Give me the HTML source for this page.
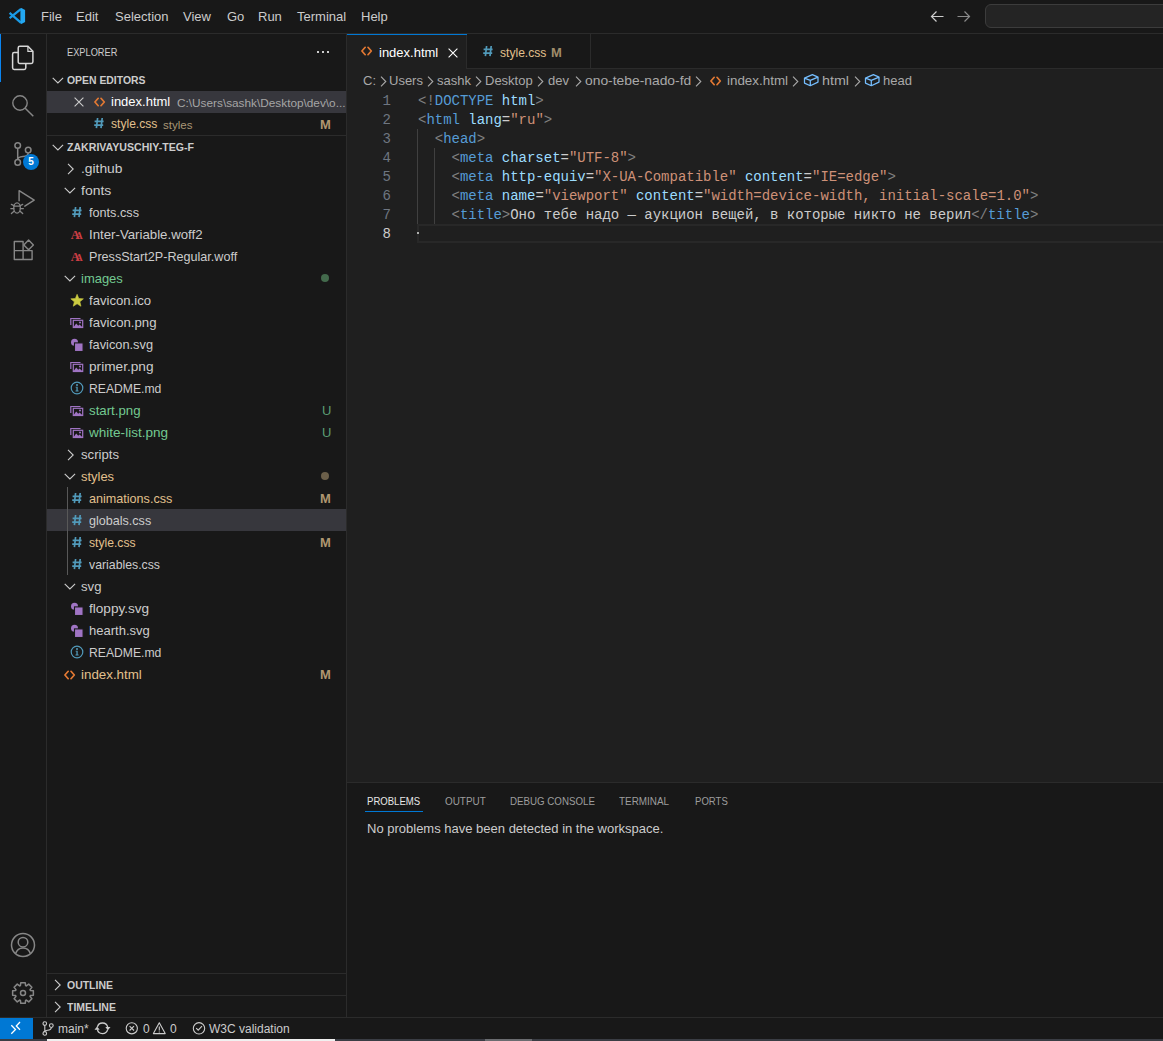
<!DOCTYPE html>
<html>
<head>
<meta charset="utf-8">
<style>
*{box-sizing:border-box;margin:0;padding:0}
html,body{width:1163px;height:1041px;overflow:hidden;background:#181818;font-family:"Liberation Sans",sans-serif;color:#cccccc}
.a{position:absolute}
.t{position:absolute;white-space:pre;font-size:13px;line-height:22px}
svg{position:absolute;overflow:visible}
/* title bar */
#title{left:0;top:0;width:1163px;height:34px;background:#181818;border-bottom:1px solid #2b2b2b}
#title .m{position:absolute;top:0;line-height:33px;font-size:13px;color:#cccccc}
/* activity bar */
#act{left:0;top:34px;width:47px;height:983px;background:#181818;border-right:1px solid #2b2b2b}
/* sidebar */
#side{left:47px;top:34px;width:300px;height:983px;background:#181818;border-right:1px solid #2b2b2b}
.row{position:absolute;left:0;width:299px;height:22px}
.hdr{font-weight:bold;font-size:11px;color:#cccccc;transform-origin:0 50%}
.gm{position:absolute;top:0;font-weight:bold;font-size:13px;line-height:22px;color:#e2c08d}
/* editor */
#editor{left:347px;top:34px;width:816px;height:748px;background:#1f1f1f}
#tabs{left:0;top:0;width:816px;height:35px;background:#181818;border-bottom:1px solid #2b2b2b}
.code{position:absolute;white-space:pre;font-family:"Liberation Mono",monospace;font-size:14px;line-height:19px;color:#cccccc;letter-spacing:-0.02px}
.p{color:#808080}.tg{color:#569cd6}.at{color:#9cdcfe}.s{color:#ce9178}
.ln{position:absolute;font-family:"Liberation Mono",monospace;font-size:14px;line-height:19px;color:#6e7681;text-align:right;width:20px}
/* panel */
#panel{left:347px;top:782px;width:816px;height:235px;background:#181818;border-top:1px solid #2b2b2b}
.pt{position:absolute;top:8px;font-size:11px;line-height:20px;color:#9d9d9d;transform-origin:0 50%}
/* status */
#status{left:0;top:1017px;width:1163px;height:22px;background:#181818;border-top:1px solid #2b2b2b}
#strip{left:0;top:1039px;width:1163px;height:2px;background:#3a3d44}
</style>
</head>
<body>
<svg width="0" height="0" style="position:absolute">
 <defs>
  <symbol style="overflow:visible" id="i-css" viewBox="0 0 16 22"><path d="M3.6 5L2.4 15.2M8.2 5L7 15.2M0.6 8.3H9.6M0.2 12.2H9.2" stroke="#519aba" stroke-width="1.7" fill="none"/></symbol>
  <symbol style="overflow:visible" id="i-html" viewBox="0 0 16 22"><path d="M4.2 7.3L0.9 11L4.2 14.7M7 7.3L10.3 11L7 14.7" stroke="#e37933" stroke-width="1.7" fill="none" stroke-linecap="round" stroke-linejoin="round"/></symbol>
  <symbol style="overflow:visible" id="i-font" viewBox="0 0 16 22"><text x="-1.3" y="14.9" font-family="Liberation Serif" font-weight="bold" font-size="12.5" fill="#cc3e44">A</text><text x="3.6" y="14.9" font-family="Liberation Serif" font-weight="bold" font-size="10" fill="#cc3e44">A</text></symbol>
  <symbol style="overflow:visible" id="i-star" viewBox="0 0 16 22"><g transform="translate(0,1)"><path d="M5.10 3.30 L6.80 7.55 L11.38 7.86 L7.86 10.80 L8.98 15.24 L5.10 12.80 L1.22 15.24 L2.34 10.80 L-1.18 7.86 L3.40 7.55Z" fill="#cbcb41" stroke="#cbcb41" stroke-width="0.6" stroke-linejoin="round"/></g></symbol>
  <symbol style="overflow:visible" id="i-img" viewBox="0 0 16 22"><g transform="translate(0,1)"><path d="M-1.2 12V5.5H8.5" stroke="#a074c4" stroke-width="1.2" fill="none"/><rect x="1.3" y="7.3" width="9.4" height="7.2" fill="none" stroke="#a074c4" stroke-width="1.2"/><path d="M1.3 14.5L4.2 10.6L6.2 12.8L7.6 11.4L10.7 14.5Z" fill="#a074c4"/><circle cx="8" cy="9.6" r="1" fill="#a074c4"/></g></symbol>
  <symbol style="overflow:visible" id="i-svg" viewBox="0 0 16 22"><circle cx="2.5" cy="8.2" r="3.5" fill="#a074c4"/><rect x="2.5" y="8.9" width="8.6" height="8.6" fill="#a074c4" stroke="#181818" stroke-width="1.1"/></symbol>
  <symbol style="overflow:visible" id="i-info" viewBox="0 0 16 22"><circle cx="5" cy="10" r="5.8" fill="none" stroke="#519aba" stroke-width="1.2"/><circle cx="5" cy="7" r="1" fill="#519aba"/><path d="M3.6 8.8H5.7V12.6H6.6V13.4H3.5V12.6H4.4V9.6H3.6Z" fill="#519aba"/></symbol>
 </defs>
</svg>
<svg width="0" height="0" style="position:absolute">
 <defs>
  <symbol style="overflow:visible" id="i-cube" viewBox="0 0 16 16"><path d="M1.5 4.1L9.4 0.6L15 3.1V8.1L7.3 11.7L1.5 9.1Z M1.5 4.1L7.3 6.4L15 3.1 M7.3 6.4V11.7" stroke="#75beff" stroke-width="1.25" fill="none" stroke-linejoin="round"/></symbol>
 </defs>
</svg>

<!-- TITLE BAR -->
<div id="title" class="a">
  <svg style="left:0;top:0" width="33" height="33" viewBox="0 0 33 33">
    <path d="M9.6 12.9L20.8 22.6M9.6 18.1L20.8 9.2" stroke="#1a9be6" stroke-width="2.3" stroke-linecap="butt"/>
    <path d="M20.4 8.3L21.4 8L25.1 9.9V21.9L21.4 23.9L20.4 23.6Z" fill="#23a8f2"/>
  </svg>
  <span class="m" style="left:41px">File</span>
  <span class="m" style="left:76px">Edit</span>
  <span class="m" style="left:115px">Selection</span>
  <span class="m" style="left:183px">View</span>
  <span class="m" style="left:227px">Go</span>
  <span class="m" style="left:258px">Run</span>
  <span class="m" style="left:297px">Terminal</span>
  <span class="m" style="left:361px">Help</span>
  <svg style="left:930px;top:10px" width="14" height="13" viewBox="0 0 14 13"><path d="M13.5 6.5H1.5M6.5 1.5L1.5 6.5L6.5 11.5" stroke="#cccccc" stroke-width="1.2" fill="none"/></svg>
  <svg style="left:957px;top:10px" width="14" height="13" viewBox="0 0 14 13"><path d="M0.5 6.5H12.5M7.5 1.5L12.5 6.5L7.5 11.5" stroke="#8a8a8a" stroke-width="1.2" fill="none"/></svg>
  <div class="a" style="left:985px;top:4px;width:190px;height:24px;border:1px solid #3c3c3c;border-radius:6px;background:#242424"></div>
</div>

<!-- ACTIVITY BAR -->
<div id="act" class="a">
  <div class="a" style="left:0;top:0;width:1px;height:48px;background:#0a84f0"></div>
  <!-- explorer -->
  <svg style="left:11px;top:11px" width="24" height="26" viewBox="0 0 24 26">
    <path d="M7.2 7.6H3.2C2.3 7.6 1.6 8.3 1.6 9.2V22.8C1.6 23.7 2.3 24.4 3.2 24.4H13.2C14.1 24.4 14.8 23.7 14.8 22.8V18.6" stroke="#d7d7d7" stroke-width="1.5" fill="none"/>
    <path d="M8.8 1.3H16.9L21.9 6.3V16.8C21.9 17.7 21.2 18.4 20.3 18.4H8.8C7.9 18.4 7.2 17.7 7.2 16.8V2.9C7.2 2 7.9 1.3 8.8 1.3Z" stroke="#d7d7d7" stroke-width="1.5" fill="none"/>
    <path d="M16.9 1.3V6.3H21.9" stroke="#d7d7d7" stroke-width="1.2" fill="none"/>
  </svg>
  <!-- search -->
  <svg style="left:11px;top:60px" width="24" height="24" viewBox="0 0 24 24">
    <circle cx="9" cy="9" r="7.2" stroke="#868686" stroke-width="1.4" fill="none"/>
    <path d="M14.2 14.2L22.3 22.3" stroke="#868686" stroke-width="1.5"/>
  </svg>
  <!-- source control -->
  <svg style="left:11px;top:108px" width="24" height="26" viewBox="0 0 24 26">
    <circle cx="6.7" cy="3.5" r="2.8" stroke="#868686" stroke-width="1.5" fill="none"/>
    <circle cx="17.2" cy="8.1" r="2.8" stroke="#868686" stroke-width="1.5" fill="none"/>
    <circle cx="6.7" cy="20.4" r="2.8" stroke="#868686" stroke-width="1.5" fill="none"/>
    <path d="M6.7 6.3V17.6M17.2 10.9C17.2 13.6 15 14.3 12 14.6C9 14.9 6.7 15.4 6.7 17.6" stroke="#868686" stroke-width="1.5" fill="none"/>
  </svg>
  <div class="a" style="left:23px;top:120px;width:16px;height:16px;border-radius:8px;background:#0078d4;color:#ffffff;font-size:10px;font-weight:bold;line-height:16px;text-align:center">5</div>
  <!-- run & debug -->
  <svg style="left:10px;top:155px" width="26" height="28" viewBox="0 0 26 28">
    <path d="M9.1 11.8V1.6L24.2 11.1L14.8 17.2" stroke="#868686" stroke-width="1.4" fill="none" stroke-linejoin="round" stroke-linecap="round"/>
    <ellipse cx="7.05" cy="19" rx="3.3" ry="5.1" stroke="#868686" stroke-width="1.3" fill="none"/>
    <path d="M3.8 17.1H10.3M1.4 15.4L3.9 16.6M12.7 15.4L10.2 16.6M0.9 19.7H3.8M10.3 19.7H13.3M1.4 24.6L4 22.2M12.7 24.6L10.1 22.2" stroke="#868686" stroke-width="1.3" fill="none" stroke-linecap="round"/>
  </svg>
  <!-- extensions -->
  <svg style="left:12px;top:205px" width="24" height="24" viewBox="0 0 24 24">
    <path d="M2.3 2.5H11.1V20.5H2.3Z M2.3 11.6H20.1V20.5H11.1" stroke="#868686" stroke-width="1.4" fill="none" stroke-linejoin="round"/>
    <path d="M16.6 1.1L21.4 5.9L16.6 10.7L11.8 5.9Z" stroke="#868686" stroke-width="1.4" fill="none" stroke-linejoin="round"/>
  </svg>
  <!-- accounts -->
  <svg style="left:10px;top:898px" width="26" height="26" viewBox="0 0 26 26">
    <circle cx="13" cy="13" r="11.5" stroke="#868686" stroke-width="1.5" fill="none"/>
    <circle cx="13" cy="10.2" r="4.8" stroke="#868686" stroke-width="1.5" fill="none"/>
    <path d="M5.6 21.6C6.8 17.9 9.6 15.9 13 15.9C16.4 15.9 19.2 17.9 20.4 21.6" stroke="#868686" stroke-width="1.5" fill="none"/>
  </svg>
  <!-- settings -->
  <svg style="left:11px;top:947px" width="24" height="24" viewBox="0 0 24 24">
    <path d="M19.35 9.40 L22.37 9.79 L22.37 14.21 L19.35 14.60 L19.04 15.36 L20.89 17.77 L17.77 20.89 L15.36 19.04 L14.60 19.35 L14.21 22.37 L9.79 22.37 L9.40 19.35 L8.64 19.04 L6.23 20.89 L3.11 17.77 L4.96 15.36 L4.65 14.60 L1.63 14.21 L1.63 9.79 L4.65 9.40 L4.96 8.64 L3.11 6.23 L6.23 3.11 L8.64 4.96 L9.40 4.65 L9.79 1.63 L14.21 1.63 L14.60 4.65 L15.36 4.96 L17.77 3.11 L20.89 6.23 L19.04 8.64Z" stroke="#868686" stroke-width="1.5" fill="none" stroke-linejoin="round"/>
    <circle cx="12" cy="12" r="2.5" stroke="#868686" stroke-width="1.5" fill="none"/>
  </svg>
</div>

<!-- SIDEBAR -->
<div id="side" class="a">
  <span class="t" style="left:20px;top:7px;font-size:11px;line-height:22px;transform:scaleX(0.84);transform-origin:0 50%">EXPLORER</span>
  <div class="a" style="left:270px;top:17px;width:2px;height:2px;background:#cccccc"></div>
  <div class="a" style="left:275px;top:17px;width:2px;height:2px;background:#cccccc"></div>
  <div class="a" style="left:280px;top:17px;width:2px;height:2px;background:#cccccc"></div>
  <div class="row" style="top:35px">
    <svg style="left:5px;top:8px" width="12" height="7" viewBox="0 0 12 7"><path d="M0.7 0.8L5.9 6L11.1 0.8" stroke="#cccccc" stroke-width="1.1" fill="none"/></svg>
    <span class="t hdr" style="left:20px;transform:scaleX(0.946)">OPEN EDITORS</span>
  </div>
  <div class="row" style="top:57px;background:#37373d">
    <svg style="left:27px;top:6px" width="10" height="10" viewBox="0 0 10 10"><path d="M0.6 0.6L9.4 9.4M9.4 0.6L0.6 9.4" stroke="#cccccc" stroke-width="1.1"/></svg>
    <svg style="left:47px;top:0" width="16" height="22"><use href="#i-html"/></svg>
    <span class="t" style="left:64px;color:#ffffff">index.html</span>
    <span class="t" style="left:130px;top:1px;font-size:11.8px;color:#a6a6a6">C:\Users\sashk\Desktop\dev\o...</span>
  </div>
  <div class="row" style="top:79px">
    <svg style="left:47px;top:0" width="16" height="22"><use href="#i-css"/></svg>
    <span class="t" style="left:64px;color:#e2c08d;transform:scaleX(0.93);transform-origin:0 50%">style.css</span>
    <span class="t" style="left:116px;top:1px;font-size:11.5px;color:#a89776">styles</span>
    <span class="gm" style="left:273px;top:1px;color:#af9670">M</span>
  </div>
  <div class="a" style="left:0;top:101px;width:299px;height:1px;background:#2b2b2b"></div>
  <div class="row" style="top:102px">
    <svg style="left:5px;top:8px" width="12" height="7" viewBox="0 0 12 7"><path d="M0.7 0.8L5.9 6L11.1 0.8" stroke="#cccccc" stroke-width="1.1" fill="none"/></svg>
    <span class="t hdr" style="left:20px;transform:scaleX(0.962)">ZAKRIVAYUSCHIY-TEG-F</span>
  </div>
<div class="row" style="top:123px"><div class="a" style="left:0;top:1px;width:299px;height:22px">
<svg style="left:20px;top:5px" width="8" height="12" viewBox="0 0 8 12"><path d="M1 0.8L6.2 6L1 11.2" stroke="#cccccc" stroke-width="1.1" fill="none"/></svg>
<span class="t" style="left:34px;color:#cccccc;transform:scaleX(1.063);transform-origin:0 50%">.github</span>
</div></div>
<div class="row" style="top:145px"><div class="a" style="left:0;top:1px;width:299px;height:22px">
<svg style="left:17px;top:7px" width="12" height="7" viewBox="0 0 12 7"><path d="M0.7 0.8L5.9 6L11.1 0.8" stroke="#cccccc" stroke-width="1.1" fill="none"/></svg>
<span class="t" style="left:34px;color:#cccccc;transform:scaleX(1.074);transform-origin:0 50%">fonts</span>
</div></div>
<div class="row" style="top:167px"><div class="a" style="left:0;top:1px;width:299px;height:22px">
<svg style="left:25px;top:0px" width="16" height="22"><use href="#i-css"/></svg>
<span class="t" style="left:42px;color:#cccccc;transform:scaleX(0.974);transform-origin:0 50%">fonts.css</span>
</div></div>
<div class="row" style="top:189px"><div class="a" style="left:0;top:1px;width:299px;height:22px">
<svg style="left:25px;top:0px" width="16" height="22"><use href="#i-font"/></svg>
<span class="t" style="left:42px;color:#cccccc;transform:scaleX(1.018);transform-origin:0 50%">Inter-Variable.woff2</span>
</div></div>
<div class="row" style="top:211px"><div class="a" style="left:0;top:1px;width:299px;height:22px">
<svg style="left:25px;top:0px" width="16" height="22"><use href="#i-font"/></svg>
<span class="t" style="left:42px;color:#cccccc;transform:scaleX(0.969);transform-origin:0 50%">PressStart2P-Regular.woff</span>
</div></div>
<div class="row" style="top:233px"><div class="a" style="left:0;top:1px;width:299px;height:22px">
<svg style="left:17px;top:7px" width="12" height="7" viewBox="0 0 12 7"><path d="M0.7 0.8L5.9 6L11.1 0.8" stroke="#cccccc" stroke-width="1.1" fill="none"/></svg>
<span class="t" style="left:34px;color:#73c991;transform:scaleX(0.998);transform-origin:0 50%">images</span>
<div class="a" style="left:274px;top:6px;width:8px;height:8px;border-radius:4px;background:#436a4c"></div>
</div></div>
<div class="row" style="top:255px"><div class="a" style="left:0;top:1px;width:299px;height:22px">
<svg style="left:25px;top:0px" width="16" height="22"><use href="#i-star"/></svg>
<span class="t" style="left:42px;color:#cccccc;transform:scaleX(1.01);transform-origin:0 50%">favicon.ico</span>
</div></div>
<div class="row" style="top:277px"><div class="a" style="left:0;top:1px;width:299px;height:22px">
<svg style="left:25px;top:0px" width="16" height="22"><use href="#i-img"/></svg>
<span class="t" style="left:42px;color:#cccccc;transform:scaleX(1.015);transform-origin:0 50%">favicon.png</span>
</div></div>
<div class="row" style="top:299px"><div class="a" style="left:0;top:1px;width:299px;height:22px">
<svg style="left:25px;top:0px" width="16" height="22"><use href="#i-svg"/></svg>
<span class="t" style="left:42px;color:#cccccc;transform:scaleX(0.984);transform-origin:0 50%">favicon.svg</span>
</div></div>
<div class="row" style="top:321px"><div class="a" style="left:0;top:1px;width:299px;height:22px">
<svg style="left:25px;top:0px" width="16" height="22"><use href="#i-img"/></svg>
<span class="t" style="left:42px;color:#cccccc;transform:scaleX(1.05);transform-origin:0 50%">primer.png</span>
</div></div>
<div class="row" style="top:343px"><div class="a" style="left:0;top:1px;width:299px;height:22px">
<svg style="left:25px;top:0px" width="16" height="22"><use href="#i-info"/></svg>
<span class="t" style="left:42px;color:#cccccc;transform:scaleX(0.936);transform-origin:0 50%">README.md</span>
</div></div>
<div class="row" style="top:365px"><div class="a" style="left:0;top:1px;width:299px;height:22px">
<svg style="left:25px;top:0px" width="16" height="22"><use href="#i-img"/></svg>
<span class="t" style="left:42px;color:#73c991;transform:scaleX(1.02);transform-origin:0 50%">start.png</span>
<span class="gm" style="left:275px;font-weight:normal;font-size:13px;color:#5c9d73">U</span>
</div></div>
<div class="row" style="top:387px"><div class="a" style="left:0;top:1px;width:299px;height:22px">
<svg style="left:25px;top:0px" width="16" height="22"><use href="#i-img"/></svg>
<span class="t" style="left:42px;color:#73c991;transform:scaleX(1.042);transform-origin:0 50%">white-list.png</span>
<span class="gm" style="left:275px;font-weight:normal;font-size:13px;color:#5c9d73">U</span>
</div></div>
<div class="row" style="top:409px"><div class="a" style="left:0;top:1px;width:299px;height:22px">
<svg style="left:20px;top:5px" width="8" height="12" viewBox="0 0 8 12"><path d="M1 0.8L6.2 6L1 11.2" stroke="#cccccc" stroke-width="1.1" fill="none"/></svg>
<span class="t" style="left:34px;color:#cccccc;transform:scaleX(1.011);transform-origin:0 50%">scripts</span>
</div></div>
<div class="row" style="top:431px"><div class="a" style="left:0;top:1px;width:299px;height:22px">
<svg style="left:17px;top:7px" width="12" height="7" viewBox="0 0 12 7"><path d="M0.7 0.8L5.9 6L11.1 0.8" stroke="#cccccc" stroke-width="1.1" fill="none"/></svg>
<span class="t" style="left:34px;color:#e2c08d;transform:scaleX(0.994);transform-origin:0 50%">styles</span>
<div class="a" style="left:274px;top:6px;width:8px;height:8px;border-radius:4px;background:#6b5f4a"></div>
</div></div>
<div class="row" style="top:453px"><div class="a" style="left:0;top:1px;width:299px;height:22px">
<svg style="left:25px;top:0px" width="16" height="22"><use href="#i-css"/></svg>
<span class="t" style="left:42px;color:#e2c08d;transform:scaleX(0.969);transform-origin:0 50%">animations.css</span>
<span class="gm" style="left:273px;color:#af9670">M</span>
</div></div>
<div class="row" style="top:475px;background:#37373d"><div class="a" style="left:0;top:1px;width:299px;height:22px">
<svg style="left:25px;top:0px" width="16" height="22"><use href="#i-css"/></svg>
<span class="t" style="left:42px;color:#cccccc;transform:scaleX(0.967);transform-origin:0 50%">globals.css</span>
</div></div>
<div class="row" style="top:497px"><div class="a" style="left:0;top:1px;width:299px;height:22px">
<svg style="left:25px;top:0px" width="16" height="22"><use href="#i-css"/></svg>
<span class="t" style="left:42px;color:#e2c08d;transform:scaleX(0.935);transform-origin:0 50%">style.css</span>
<span class="gm" style="left:273px;color:#af9670">M</span>
</div></div>
<div class="row" style="top:519px"><div class="a" style="left:0;top:1px;width:299px;height:22px">
<svg style="left:25px;top:0px" width="16" height="22"><use href="#i-css"/></svg>
<span class="t" style="left:42px;color:#cccccc;transform:scaleX(0.945);transform-origin:0 50%">variables.css</span>
</div></div>
<div class="row" style="top:541px"><div class="a" style="left:0;top:1px;width:299px;height:22px">
<svg style="left:17px;top:7px" width="12" height="7" viewBox="0 0 12 7"><path d="M0.7 0.8L5.9 6L11.1 0.8" stroke="#cccccc" stroke-width="1.1" fill="none"/></svg>
<span class="t" style="left:34px;color:#cccccc;transform:scaleX(1.011);transform-origin:0 50%">svg</span>
</div></div>
<div class="row" style="top:563px"><div class="a" style="left:0;top:1px;width:299px;height:22px">
<svg style="left:25px;top:0px" width="16" height="22"><use href="#i-svg"/></svg>
<span class="t" style="left:42px;color:#cccccc;transform:scaleX(1.045);transform-origin:0 50%">floppy.svg</span>
</div></div>
<div class="row" style="top:585px"><div class="a" style="left:0;top:1px;width:299px;height:22px">
<svg style="left:25px;top:0px" width="16" height="22"><use href="#i-svg"/></svg>
<span class="t" style="left:42px;color:#cccccc;transform:scaleX(1.002);transform-origin:0 50%">hearth.svg</span>
</div></div>
<div class="row" style="top:607px"><div class="a" style="left:0;top:1px;width:299px;height:22px">
<svg style="left:25px;top:0px" width="16" height="22"><use href="#i-info"/></svg>
<span class="t" style="left:42px;color:#cccccc;transform:scaleX(0.936);transform-origin:0 50%">README.md</span>
</div></div>
<div class="row" style="top:629px"><div class="a" style="left:0;top:1px;width:299px;height:22px">
<svg style="left:17px;top:0px" width="16" height="22"><use href="#i-html"/></svg>
<span class="t" style="left:34px;color:#e2c08d;transform:scaleX(1.026);transform-origin:0 50%">index.html</span>
<span class="gm" style="left:273px;color:#af9670">M</span>
</div></div>

  <div class="a" style="left:20px;top:453px;width:1px;height:88px;background:#585858"></div>
  <div class="a" style="left:0;top:939px;width:299px;height:1px;background:#2b2b2b"></div>
  <div class="row" style="top:940px">
    <svg style="left:7px;top:5px" width="8" height="12" viewBox="0 0 8 12"><path d="M1 0.8L6.2 6L1 11.2" stroke="#cccccc" stroke-width="1.1" fill="none"/></svg>
    <span class="t hdr" style="left:20px;transform:scaleX(0.952)">OUTLINE</span>
  </div>
  <div class="a" style="left:0;top:961px;width:299px;height:1px;background:#2b2b2b"></div>
  <div class="row" style="top:962px">
    <svg style="left:7px;top:5px" width="8" height="12" viewBox="0 0 8 12"><path d="M1 0.8L6.2 6L1 11.2" stroke="#cccccc" stroke-width="1.1" fill="none"/></svg>
    <span class="t hdr" style="left:20px;transform:scaleX(0.952)">TIMELINE</span>
  </div>
</div>

<!-- EDITOR -->
<div id="editor" class="a">
  <div id="tabs" class="a">
    <div class="a" style="left:0;top:0;width:120px;height:35px;background:#1f1f1f;border-right:1px solid #2b2b2b"></div>
    <div class="a" style="left:0;top:0;width:120px;height:1px;background:#0078d4"></div>
    <svg style="left:14px;top:6px" width="16" height="22"><use href="#i-html"/></svg>
    <span class="t" style="left:32px;top:8px;color:#ffffff">index.html</span>
    <svg style="left:101px;top:14px" width="10" height="10" viewBox="0 0 10 10"><path d="M0.6 0.6L9.4 9.4M9.4 0.6L0.6 9.4" stroke="#ffffff" stroke-width="1.1"/></svg>
    <div class="a" style="left:120px;top:0;width:124px;height:34px;border-right:1px solid #2b2b2b"></div>
    <svg style="left:136px;top:7px" width="16" height="22"><use href="#i-css"/></svg>
    <span class="t" style="left:153px;top:8px;color:#e2c08d;transform:scaleX(0.93);transform-origin:0 50%">style.css</span>
    <span class="gm" style="left:204px;top:8px;color:#a08c6a">M</span>
  </div>
  <!-- breadcrumbs -->
  <div class="a" style="left:0;top:36px;width:816px;height:22px">
    <span class="t" style="left:16px;color:#a9a9a9">C:</span>
    <svg style="left:33px;top:6px" width="8" height="11" viewBox="0 0 8 11"><path d="M1 0.6L5.8 5.5L1 10.4" stroke="#a9a9a9" stroke-width="1.1" fill="none"/></svg>
    <span class="t" style="left:42px;color:#a9a9a9">Users</span>
    <svg style="left:80px;top:6px" width="8" height="11" viewBox="0 0 8 11"><path d="M1 0.6L5.8 5.5L1 10.4" stroke="#a9a9a9" stroke-width="1.1" fill="none"/></svg>
    <span class="t" style="left:90px;color:#a9a9a9">sashk</span>
    <svg style="left:128px;top:6px" width="8" height="11" viewBox="0 0 8 11"><path d="M1 0.6L5.8 5.5L1 10.4" stroke="#a9a9a9" stroke-width="1.1" fill="none"/></svg>
    <span class="t" style="left:138px;color:#a9a9a9">Desktop</span>
    <svg style="left:190px;top:6px" width="8" height="11" viewBox="0 0 8 11"><path d="M1 0.6L5.8 5.5L1 10.4" stroke="#a9a9a9" stroke-width="1.1" fill="none"/></svg>
    <span class="t" style="left:201px;color:#a9a9a9">dev</span>
    <svg style="left:228px;top:6px" width="8" height="11" viewBox="0 0 8 11"><path d="M1 0.6L5.8 5.5L1 10.4" stroke="#a9a9a9" stroke-width="1.1" fill="none"/></svg>
    <span class="t" style="left:238px;color:#a9a9a9;transform:scaleX(1.065);transform-origin:0 50%">ono-tebe-nado-fd</span>
    <svg style="left:348px;top:6px" width="8" height="11" viewBox="0 0 8 11"><path d="M1 0.6L5.8 5.5L1 10.4" stroke="#a9a9a9" stroke-width="1.1" fill="none"/></svg>
    <svg style="left:363px;top:0px" width="16" height="22"><use href="#i-html"/></svg>
    <span class="t" style="left:380px;color:#a9a9a9;transform:scaleX(1.03);transform-origin:0 50%">index.html</span>
    <svg style="left:445px;top:6px" width="8" height="11" viewBox="0 0 8 11"><path d="M1 0.6L5.8 5.5L1 10.4" stroke="#a9a9a9" stroke-width="1.1" fill="none"/></svg>
    <svg style="left:456px;top:4px" width="16" height="16" viewBox="0 0 16 16"><use href="#i-cube"/></svg>
    <span class="t" style="left:475px;color:#a9a9a9;transform:scaleX(1.1);transform-origin:0 50%">html</span>
    <svg style="left:507px;top:6px" width="8" height="11" viewBox="0 0 8 11"><path d="M1 0.6L5.8 5.5L1 10.4" stroke="#a9a9a9" stroke-width="1.1" fill="none"/></svg>
    <svg style="left:517px;top:4px" width="16" height="16" viewBox="0 0 16 16"><use href="#i-cube"/></svg>
    <span class="t" style="left:536px;color:#a9a9a9">head</span>
  </div>
  <!-- gutter -->
  <div class="ln" style="left:24px;top:58px;width:20px">1<br>2<br>3<br>4<br>5<br>6<br>7<br><span style="color:#cccccc">8</span></div>
  <!-- indent guides -->
  <div class="a" style="left:70px;top:95px;width:1px;height:95px;background:#404040"></div>
  <div class="a" style="left:87px;top:114px;width:1px;height:76px;background:#404040"></div>
  <!-- current line -->
  <div class="a" style="left:70px;top:190px;width:746px;height:19px;border:2px solid #282828;border-right:none"></div>
  <div class="a" style="left:70px;top:198px;width:2px;height:2px;background:#aeafad"></div>
  <div class="code" style="left:71px;top:58px"><span class="p">&lt;!</span><span class="tg">DOCTYPE</span> <span class="at">html</span><span class="p">&gt;</span>
<span class="p">&lt;</span><span class="tg">html</span> <span class="at">lang</span>=<span class="s">"ru"</span><span class="p">&gt;</span>
  <span class="p">&lt;</span><span class="tg">head</span><span class="p">&gt;</span>
    <span class="p">&lt;</span><span class="tg">meta</span> <span class="at">charset</span>=<span class="s">"UTF-8"</span><span class="p">&gt;</span>
    <span class="p">&lt;</span><span class="tg">meta</span> <span class="at">http-equiv</span>=<span class="s">"X-UA-Compatible"</span> <span class="at">content</span>=<span class="s">"IE=edge"</span><span class="p">&gt;</span>
    <span class="p">&lt;</span><span class="tg">meta</span> <span class="at">name</span>=<span class="s">"viewport"</span> <span class="at">content</span>=<span class="s">"width=device-width, initial-scale=1.0"</span><span class="p">&gt;</span>
    <span class="p">&lt;</span><span class="tg">title</span><span class="p">&gt;</span>Оно тебе надо — аукцион вещей, в которые никто не верил<span class="p">&lt;/</span><span class="tg">title</span><span class="p">&gt;</span>
</div>
</div>

<!-- PANEL -->
<div id="panel" class="a">
  <span class="pt" style="left:20px;color:#e7e7e7;transform:scaleX(0.87)">PROBLEMS</span>
  <div class="a" style="left:18px;top:28px;width:58px;height:1px;background:#0078d4"></div>
  <span class="pt" style="left:98px;transform:scaleX(0.9)">OUTPUT</span>
  <span class="pt" style="left:163px;transform:scaleX(0.885)">DEBUG CONSOLE</span>
  <span class="pt" style="left:272px;transform:scaleX(0.9)">TERMINAL</span>
  <span class="pt" style="left:348px;transform:scaleX(0.87)">PORTS</span>
  <span class="t" style="left:20px;top:35px;color:#cccccc">No problems have been detected in the workspace.</span>
</div>

<!-- STATUS -->
<div id="status" class="a">
  <div class="a" style="left:0;top:0;width:33px;height:21px;background:#0078d4"></div>
  <svg style="left:9px;top:3px" width="14" height="14" viewBox="0 0 14 14"><path d="M2.3 4.2L6.5 8.5L2.3 12.8M11 1L7.3 5L11 8.7" stroke="#ffffff" stroke-width="1.3" fill="none"/></svg>
  <svg style="left:42px;top:3px" width="13" height="15" viewBox="0 0 13 15"><circle cx="2.8" cy="2.6" r="1.8" stroke="#cccccc" stroke-width="1.1" fill="none"/><circle cx="9.3" cy="4.6" r="1.9" stroke="#cccccc" stroke-width="1.1" fill="none"/><circle cx="2.8" cy="12.4" r="1.8" stroke="#cccccc" stroke-width="1.1" fill="none"/><path d="M2.8 4.4V10.6M9.3 6.5C9.3 8.4 7.5 9 5.6 9.2C4 9.4 2.8 9.8 2.8 10.6" stroke="#cccccc" stroke-width="1.1" fill="none"/></svg>
  <span class="t" style="left:58px;top:1px;font-size:12px;line-height:21px">main*</span>
  <svg style="left:95px;top:3px" width="16" height="15" viewBox="0 0 16 15"><path d="M2.38 5.93A5.3 5.3 0 0 1 12.68 6.20" stroke="#cccccc" stroke-width="1.3" fill="none"/><path d="M10.3 5.9H15.5L12.9 9.2Z" fill="#cccccc"/><path d="M12.62 8.67A5.3 5.3 0 0 1 2.32 8.40" stroke="#cccccc" stroke-width="1.3" fill="none"/><path d="M-0.5 8.7H4.7L2.1 5.4Z" fill="#cccccc"/></svg>
  <svg style="left:125px;top:3px" width="14" height="14" viewBox="0 0 14 14"><circle cx="6.8" cy="7.3" r="5.6" stroke="#cccccc" stroke-width="1.1" fill="none"/><path d="M4.6 5.1L9 9.5M9 5.1L4.6 9.5" stroke="#cccccc" stroke-width="1.1"/></svg>
  <span class="t" style="left:143px;top:1px;font-size:12px;line-height:21px">0</span>
  <svg style="left:152px;top:3px" width="15" height="14" viewBox="0 0 15 14"><path d="M7.3 1.8L13.2 12.6H1.4Z M7.3 5.4V9.4M7.3 10.4V11.4" stroke="#cccccc" stroke-width="1.1" fill="none" stroke-linejoin="round"/></svg>
  <span class="t" style="left:170px;top:1px;font-size:12px;line-height:21px">0</span>
  <svg style="left:192px;top:3px" width="14" height="14" viewBox="0 0 14 14"><circle cx="7" cy="7.3" r="5.7" stroke="#cccccc" stroke-width="1.1" fill="none"/><path d="M4.2 7.2L6.2 9.2L10 5.2" stroke="#cccccc" stroke-width="1.1" fill="none"/></svg>
  <span class="t" style="left:209px;top:1px;font-size:12px;line-height:21px">W3C validation</span>
</div>
<div id="strip" class="a"></div>
<div class="a" style="left:47px;top:1039px;width:288px;height:2px;background:#f0f0f0"></div>
<div class="a" style="left:485px;top:1039px;width:47px;height:2px;background:#6a6c70"></div>
</body>
</html>
